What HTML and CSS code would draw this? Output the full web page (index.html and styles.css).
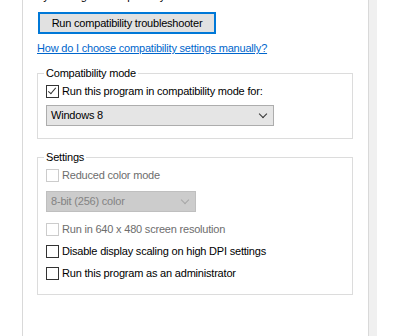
FILE: index.html
```html
<!DOCTYPE html>
<html lang="en">
<head>
    <meta charset="UTF-8">
    <meta name="viewport" content="width=device-width, initial-scale=1.0">
    <title>Compatibility</title>

    <link rel="stylesheet" href="styles.css">
</head>
<body>

    <div class="window">
        <!-- Tab page -->
        <div class="page">
            <p class="intro">try running the compatibility troubleshooter.</p>

            <button class="btn" type="button">Run compatibility troubleshooter</button>

            <a class="link" href="#">How do I choose compatibility settings manually?</a>

            <!-- Compatibility mode group -->
            <fieldset class="group">
                <legend>Compatibility mode</legend>

                <label class="check">
                    <span class="box checked"></span>
                    Run this program in compatibility mode for:
                </label>

                <div class="select wide">
                    <span>Windows 8</span>
                    <span class="chevron"></span>
                </div>
            </fieldset>

            <!-- Settings group -->
            <fieldset class="group settings">
                <legend>Settings</legend>

                <label class="check disabled">
                    <span class="box"></span>
                    Reduced color mode
                </label>

                <div class="select narrow disabled">
                    <span>8-bit (256) color</span>
                    <span class="chevron"></span>
                </div>

                <label class="check disabled spaced">
                    <span class="box"></span>
                    Run in 640 x 480 screen resolution
                </label>

                <label class="check">
                    <span class="box"></span>
                    Disable display scaling on high DPI settings
                </label>

                <label class="check">
                    <span class="box"></span>
                    Run this program as an administrator
                </label>
            </fieldset>
        </div>

        <!-- Scroll strip on the right -->
        <div class="strip"></div>
    </div>

</body>
</html>
```

FILE: styles.css
```css
body {
    margin: 0;
    background-color: #fff;
    color: #000;
    font-family: "Liberation Sans", Arial, sans-serif;
    font-size: 11px;
    letter-spacing: -0.2px;
    line-height: 15px;
    overflow: hidden;
}

.window {
    display: flex;
    height: 336px;
}

/* Tab page */
.page {
    width: 331px;
    margin-left: 22px;
    padding-left: 14px;
    border-left: 1px solid #d9d9d9;
    border-right: 1px solid #d9d9d9;
    display: flex;
    flex-direction: column;
    align-items: flex-start;
}

.strip {
    width: 8px;
    background-color: #f0f0f0;
}

.intro {
    margin: -11px 0 0 0;
}

/* Button */
.btn {
    margin-top: 8px;
    margin-left: 1px;
    width: 178px;
    height: 22px;
    padding: 0;
    border: 2px solid #0078d7;
    background-color: #e1e1e1;
    font-family: inherit;
    font-size: 11px;
    letter-spacing: inherit;
    color: #000;
}

.link {
    margin-top: 7px;
    color: #0066cc;
    text-decoration: underline;
}

/* Group boxes */
.group {
    margin: 11px 0 0 0;
    padding: 0 8px 12px 8px;
    width: 298px;
    border: 1px solid #dcdcdc;
}

.group legend {
    padding: 0 2px;
    margin-left: -2px;
    line-height: 13px;
}

.settings {
    margin-top: 12px;
    padding-bottom: 10px;
}

/* Checkboxes */
.check {
    display: flex;
    align-items: center;
    gap: 3px;
    height: 22px;
}

.box {
    width: 11px;
    height: 11px;
    border: 1px solid #333;
    background-color: #fff;
    position: relative;
}

.box.checked::after {
    content: "";
    position: absolute;
    left: 3px;
    top: 0px;
    width: 3px;
    height: 7px;
    border-right: 1px solid #333;
    border-bottom: 1px solid #333;
    transform: rotate(40deg);
}

.check.disabled {
    color: #6d6d6d;
}

.check.disabled .box {
    border-color: #cccccc;
}

.spaced {
    margin-top: 6px;
}

/* Dropdowns */
.select {
    margin-top: 3px;
    height: 19px;
    padding: 0 0 0 4px;
    border: 1px solid #adadad;
    background-color: #e5e5e5;
    display: flex;
    align-items: center;
    justify-content: space-between;
}

.select.wide {
    width: 222px;
}

.select.narrow {
    margin-top: 5px;
    width: 144px;
}

.select.disabled {
    background-color: #cccccc;
    border-color: #bfbfbf;
    color: #838383;
}

.chevron {
    width: 5px;
    height: 5px;
    margin: 0 7px 4px 0;
    border-right: 1px solid #333;
    border-bottom: 1px solid #333;
    transform: rotate(45deg);
}

.select.disabled .chevron {
    border-color: #a6a6a6;
}
```
